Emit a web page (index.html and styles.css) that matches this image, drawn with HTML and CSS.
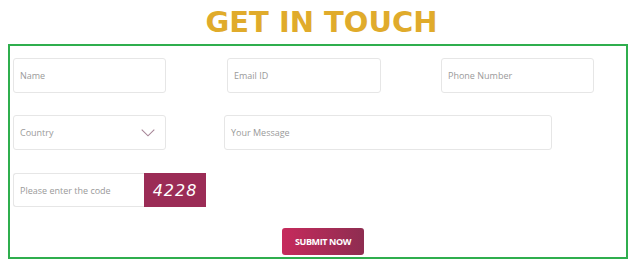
FILE: index.html
```html
<!DOCTYPE html>
<html>
<head>
<meta charset="utf-8">
<link rel="stylesheet" href="styles.css">
</head>
<body>
<h1 class="title">GET IN TOUCH</h1>
<form class="contact">
  <div class="row row-one">
    <div class="field w153">Name</div>
    <div class="field w154">Email ID</div>
    <div class="field w153">Phone Number</div>
  </div>
  <div class="row row-two">
    <div class="field w153 select">
      <span>Country</span>
      <svg class="chev" width="14" height="8" viewBox="0 0 14 8"><path d="M0.7 0.7 L7 6.8 L13.3 0.7" fill="none" stroke="#a68596" stroke-width="1.1"/></svg>
    </div>
    <div class="field message">Your Message</div>
  </div>
  <div class="row row-three">
    <div class="field code">Please enter the code</div>
    <div class="captcha">4228</div>
  </div>
  <div class="row row-submit">
    <div class="submit">SUBMIT NOW</div>
  </div>
</form>
</body>
</html>
```
FILE: styles.css
```css
html, body {
  margin: 0;
  padding: 0;
  background: #ffffff;
}
.title {
  margin: 0;
  height: 44px;
  line-height: 44px;
  text-align: center;
  padding-left: 8px;
  font-family: "DejaVu Sans", sans-serif;
  font-weight: bold;
  font-size: 29px;
  color: #e0ab2b;
  letter-spacing: 0;
}
.contact {
  box-sizing: border-box;
  margin: 0 7px 0 8px;
  width: 620px;
  height: 215px;
  border: 2px solid #2fae4e;
  padding: 12px 0 0 3px;
  display: flex;
  flex-direction: column;
  gap: 22px;
}
.row {
  display: flex;
  align-items: stretch;
  height: 35px;
}
.row-one .field + .field {
  margin-left: 61px;
}
.row-one .field:last-child {
  margin-left: 60px;
}
.field {
  box-sizing: border-box;
  height: 35px;
  border: 1px solid #e6e6e6;
  border-radius: 3px;
  padding-left: 6px;
  display: flex;
  align-items: center;
  font-family: "Open Sans", sans-serif;
  font-size: 9px;
  color: #9a9a9a;
}
.w153 { width: 153px; }
.w154 { width: 154px; }
.select {
  justify-content: space-between;
  padding-right: 10px;
}
.chev {
  display: block;
  margin-top: 1px;
}
.message {
  margin-left: 58px;
  width: 328px;
}
.row-three {
  height: 34px;
  margin-top: 1px;
}
.code {
  width: 131px;
  height: 34px;
  border-radius: 3px 0 0 3px;
  border-right: none;
}
.captcha {
  width: 62px;
  height: 34px;
  background: #9b2c56;
  color: #ffffff;
  font-family: "DejaVu Sans", sans-serif;
  font-style: italic;
  font-size: 16px;
  letter-spacing: 1px;
  display: flex;
  align-items: center;
  justify-content: center;
}
.row-submit {
  height: 27px;
  margin-top: -1px;
}
.submit {
  margin-left: 269px;
  width: 82px;
  height: 27px;
  border-radius: 3px;
  background: linear-gradient(90deg, #c62a5c 0%, #8e2d51 100%);
  color: #ffffff;
  font-family: "Open Sans", sans-serif;
  font-weight: 700;
  font-size: 9px;
  letter-spacing: -0.4px;
  display: flex;
  align-items: center;
  justify-content: center;
}
```
